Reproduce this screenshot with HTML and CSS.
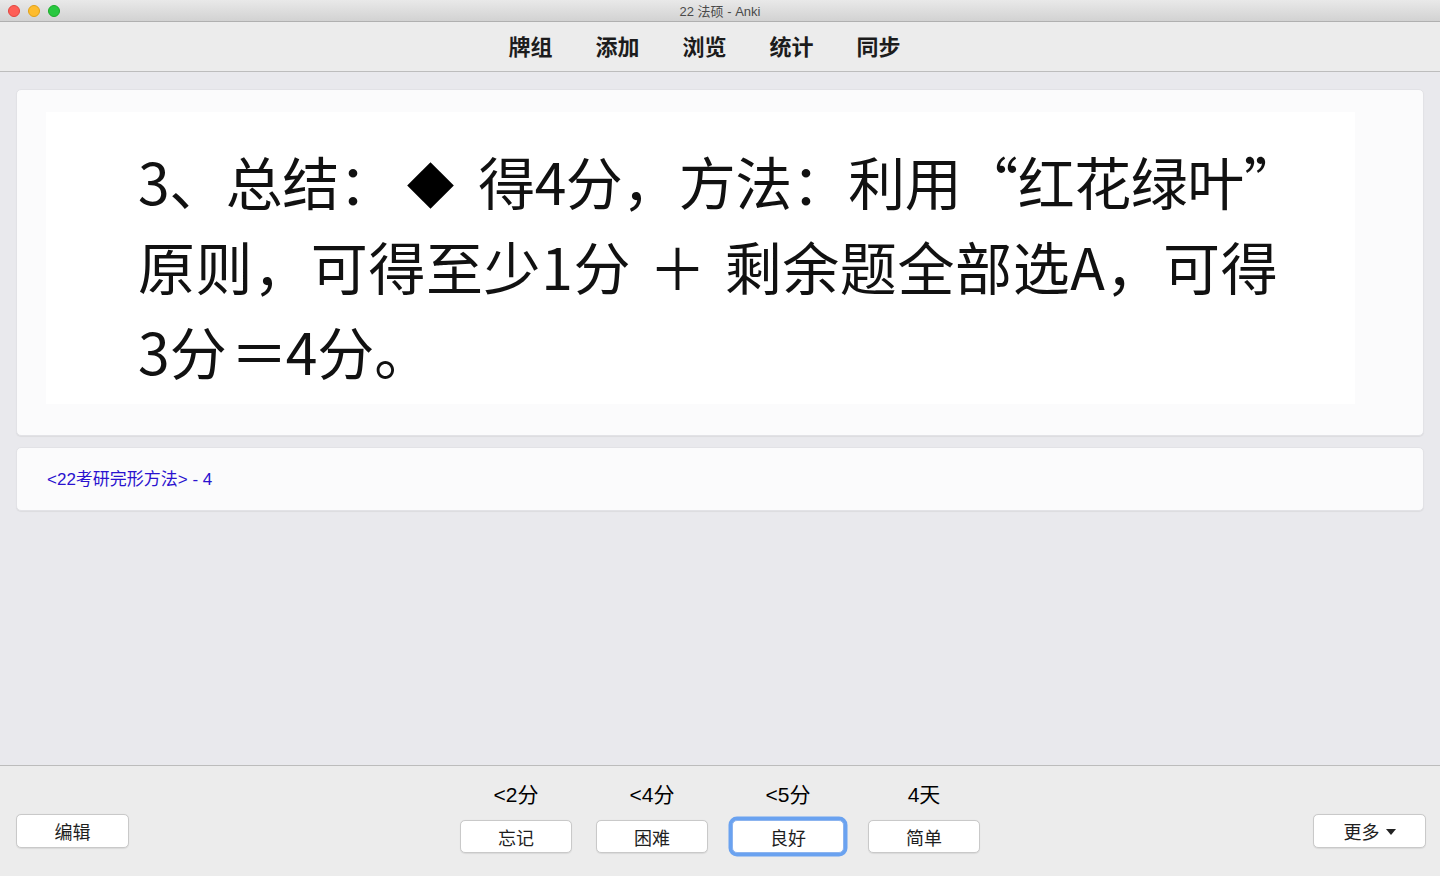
FILE: index.html
```html
<!DOCTYPE html>
<html lang="zh">
<head>
<meta charset="utf-8">
<title>22 法硕 - Anki</title>
<link rel="stylesheet" href="styles.css">
</head>
<body>
<div class="window">
  <header class="titlebar">
    <div class="lights">
      <span class="light red"></span>
      <span class="light yellow"></span>
      <span class="light green"></span>
    </div>
    <div class="title">22 法硕 - Anki</div>
  </header>
  <nav class="toolbar">
    <a class="tb-link">牌组</a>
    <a class="tb-link">添加</a>
    <a class="tb-link">浏览</a>
    <a class="tb-link">统计</a>
    <a class="tb-link">同步</a>
  </nav>
  <main class="main">
    <section class="card">
      <div class="card-image">
        <p class="card-text"><span class="l1">3、总结：<span class="diamond" aria-label="◆"></span>得4分，方法：利用“红花绿叶”</span><br><span class="l2">原则，可得至少1分<span class="plus">＋</span>剩余题全部选A，可得</span><br>3分<span class="eq">＝</span>4分。</p>
      </div>
    </section>
    <section class="tags">
      <span class="tag-text">&lt;22考研完形方法&gt; - 4</span>
    </section>
  </main>
  <footer class="bottombar">
    <div class="bb-left">
      <button class="btn">编辑</button>
    </div>
    <div class="answers">
      <div class="ans">
        <div class="ans-time">&lt;2分</div>
        <button class="btn">忘记</button>
      </div>
      <div class="ans">
        <div class="ans-time">&lt;4分</div>
        <button class="btn">困难</button>
      </div>
      <div class="ans">
        <div class="ans-time">&lt;5分</div>
        <button class="btn focus">良好</button>
      </div>
      <div class="ans">
        <div class="ans-time">4天</div>
        <button class="btn">简单</button>
      </div>
    </div>
    <div class="bb-right">
      <button class="btn more">更多 <span class="caret"></span></button>
    </div>
  </footer>
</div>
</body>
</html>
```
FILE: styles.css
```css
* { box-sizing: border-box; }
html, body { margin: 0; padding: 0; }
body {
  width: 1440px;
  height: 876px;
  overflow: hidden;
  font-family: "Liberation Sans", "Noto Sans CJK SC", sans-serif;
  background: #ececec;
}
.window {
  display: flex;
  flex-direction: column;
  height: 876px;
}
.titlebar {
  position: relative;
  height: 22px;
  background: linear-gradient(#e9e9e9, #d2d2d2);
  border-bottom: 1px solid #b0b0b0;
  display: flex;
  align-items: center;
  justify-content: center;
}
.lights {
  position: absolute;
  left: 8px;
  top: 5px;
  display: flex;
  gap: 8px;
}
.light {
  width: 12px;
  height: 12px;
  border-radius: 50%;
}
.red { background: #fe5f57; border: 1px solid #e2463f; }
.yellow { background: #febc2e; border: 1px solid #e1a116; }
.green { background: #28c840; border: 1px solid #1aab29; }
.title {
  font-size: 13px;
  color: #4a4a4a;
}
.toolbar {
  height: 50px;
  background: #ececec;
  border-bottom: 1px solid #bdbdbd;
  display: flex;
  justify-content: center;
  align-items: center;
  gap: 43px;
  padding: 0 31px 4px 0;
}
.tb-link {
  font-family: "Noto Sans CJK SC", sans-serif;
  font-weight: 700;
  font-size: 22px;
  color: #1c1c1c;
  line-height: 1;
}
.main {
  flex: 1;
  background: #e9e9ed;
  padding: 17px 16px 0 16px;
  display: flex;
  flex-direction: column;
  gap: 11px;
}
.card {
  height: 347px;
  background: #fbfbfc;
  border-radius: 5px;
  border: 1px solid #e2e2e6;
  box-shadow: 0 1px 1px rgba(0,0,0,0.06);
  padding: 22px 0 0 29px;
}
.card-image {
  width: 1309px;
  height: 292px;
  background: #ffffff;
  padding: 26px 0 0 92px;
}
.card-text {
  margin: 0;
  font-family: "Noto Sans CJK SC", sans-serif;
  font-size: 57px;
  line-height: 85px;
  color: #111111;
  white-space: nowrap;
}
.l1 {
  letter-spacing: -0.5px;
}
.l2 {
  letter-spacing: 0.6px;
}
.diamond {
  display: inline-block;
  width: 33px;
  height: 33px;
  background: #000000;
  transform: rotate(45deg);
  margin: 0 31px 0 19px;
  vertical-align: 3px;
}
.plus {
  margin: 0 18px;
}
.eq {
  margin: 0 -2px 0 4px;
}
.tags {
  height: 64px;
  background: #fbfbfc;
  border-radius: 5px;
  border: 1px solid #e2e2e6;
  box-shadow: 0 1px 1px rgba(0,0,0,0.06);
  display: flex;
  align-items: center;
  padding: 0 0 4px 30px;
}
.tag-text {
  font-size: 17px;
  color: #2a12cf;
}
.bottombar {
  height: 111px;
  background: #ececec;
  border-top: 1px solid #bcbcbc;
  display: grid;
  grid-template-columns: 1fr auto 1fr;
}
.bb-left {
  padding: 48px 0 0 16px;
}
.bb-right {
  display: flex;
  justify-content: flex-end;
  padding: 48px 14px 0 0;
  align-items: flex-start;
}
.btn {
  width: 113px;
  height: 34px;
  background: #ffffff;
  border: 1px solid #c9c9c9;
  border-radius: 5px;
  box-shadow: 0 0.5px 1px rgba(0,0,0,0.08);
  font-family: "Noto Sans CJK SC", sans-serif;
  font-size: 18px;
  color: #1e1e1e;
  padding: 0;
  line-height: 1;
  display: inline-flex;
  align-items: center;
  justify-content: center;
}
.answers {
  display: flex;
  gap: 24px;
  padding-top: 16px;
}
.ans {
  display: flex;
  flex-direction: column;
  align-items: center;
  gap: 12px;
  width: 112px;
}
.ans .btn {
  width: 112px;
  height: 33px;
}
.ans-time {
  font-size: 21px;
  line-height: 26px;
  color: #000000;
}
.btn.focus {
  border-color: #8cb4ef;
  box-shadow: 0 0 0 3.5px #6aa2f0;
}
.more {
  gap: 6px;
}
.caret {
  display: inline-block;
  width: 0;
  height: 0;
  border-left: 5px solid transparent;
  border-right: 5px solid transparent;
  border-top: 6px solid #222;
  margin-top: 2px;
}
```
